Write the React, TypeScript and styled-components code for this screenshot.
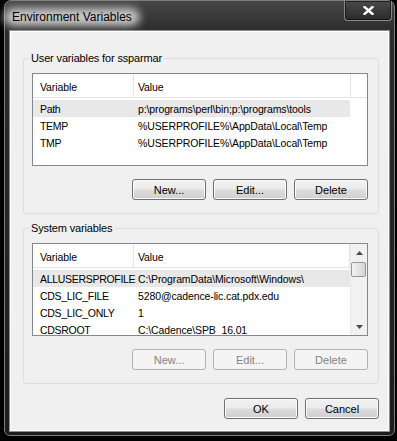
import React from 'react';
import styled, { createGlobalStyle } from 'styled-components';

type Variable = { name: string; value: string; selected?: boolean };

const userVars: Variable[] = [
  { name: 'Path', value: 'p:\\programs\\perl\\bin;p:\\programs\\tools', selected: true },
  { name: 'TEMP', value: '%USERPROFILE%\\AppData\\Local\\Temp' },
  { name: 'TMP', value: '%USERPROFILE%\\AppData\\Local\\Temp' },
];

const systemVars: Variable[] = [
  { name: 'ALLUSERSPROFILE', value: 'C:\\ProgramData\\Microsoft\\Windows\\', selected: true },
  { name: 'CDS_LIC_FILE', value: '5280@cadence-lic.cat.pdx.edu' },
  { name: 'CDS_LIC_ONLY', value: '1' },
  { name: 'CDSROOT', value: 'C:\\Cadence\\SPB_16.01' },
];

const Arrow: React.FC<{ down?: boolean }> = ({ down }) => (
  <svg width="7" height="4" viewBox="0 0 7 4">
    <path d={down ? 'M0 0 H7 L3.5 4 Z' : 'M0 4 H7 L3.5 0 Z'} fill="#4a4a4a" />
  </svg>
);

const VarList: React.FC<{ rows: Variable[]; scroll?: boolean }> = ({ rows, scroll }) => (
  <ListBox>
    <ListMain>
      <Header>
        <HeaderCell $w={101} $pad={7}>Variable</HeaderCell>
        <HeaderCell $w={scroll ? 216 : 217} $pad={4}>Value</HeaderCell>
        {!scroll && <HeaderFill />}
      </Header>
      <Rows>
        {rows.map((r) => (
          <Row key={r.name} $selected={r.selected}>
            <NameCell>{r.name}</NameCell>
            <ValueCell>{r.value}</ValueCell>
          </Row>
        ))}
      </Rows>
    </ListMain>
    {scroll && (
      <ScrollBar>
        <ScrollArrow>
          <Arrow />
        </ScrollArrow>
        <Thumb />
        <ScrollTrack />
        <ScrollArrow>
          <Arrow down />
        </ScrollArrow>
      </ScrollBar>
    )}
  </ListBox>
);

const App: React.FC = () => {
  return (
    <>
      <GlobalStyle />
      <Frame>
        <TitleBar>
          <Title>Environment Variables</Title>
          <CloseButton>
            <svg width="11" height="9" viewBox="0 0 11 9">
              <path d="M1.5 1 L9.5 8 M9.5 1 L1.5 8" stroke="#fff" strokeWidth="2.4" strokeLinecap="square" />
            </svg>
          </CloseButton>
        </TitleBar>
        <Client>
          <Group>
            <GroupLabel>User variables for ssparmar</GroupLabel>
            <VarList rows={userVars} />
            <ButtonRow>
              <Button>New...</Button>
              <Button>Edit...</Button>
              <Button>Delete</Button>
            </ButtonRow>
          </Group>
          <Group $second>
            <GroupLabel>System variables</GroupLabel>
            <VarList rows={systemVars} scroll />
            <ButtonRow>
              <Button disabled>New...</Button>
              <Button disabled>Edit...</Button>
              <Button disabled>Delete</Button>
            </ButtonRow>
          </Group>
          <Footer>
            <Button>OK</Button>
            <Button>Cancel</Button>
          </Footer>
        </Client>
      </Frame>
    </>
  );
};

export default App;

const GlobalStyle = createGlobalStyle`
  html, body {
    margin: 0;
    padding: 0;
    background: #000;
  }
  body {
    width: 397px;
    height: 441px;
    overflow: hidden;
    font-family: "Liberation Sans", Arial, sans-serif;
  }
`;

const Frame = styled.div`
  box-sizing: border-box;
  width: 391px;
  height: 436px;
  margin-left: 4px;
  border: 1px solid #7d7d7d;
  border-radius: 7px 7px 6px 6px;
  background: linear-gradient(#474747 0px, #2c2c2c 30px, #1d1d1d 100%);
  display: flex;
  flex-direction: column;
`;

const TitleBar = styled.div`
  height: 29px;
  flex-shrink: 0;
  display: flex;
  justify-content: space-between;
  align-items: flex-start;
  padding: 0 2px 0 1px;
`;

const Title = styled.div`
  position: relative;
  z-index: 0;
  margin-top: 4px;
  padding: 0 6px;
  height: 24px;
  line-height: 24px;
  font-size: 12px;
  color: #000;

  &::before {
    content: '';
    position: absolute;
    inset: 3px -2px;
    z-index: -1;
    background: rgba(215, 215, 215, 0.9);
    border-radius: 10px;
    filter: blur(4px);
  }
`;

const CloseButton = styled.div`
  box-sizing: border-box;
  width: 48px;
  height: 20px;
  border: 1px solid #8a8a8a;
  border-top: none;
  border-radius: 0 0 4px 4px;
  background: linear-gradient(#4a4a4a, #2b2b2b);
  box-shadow: inset 0 0 0 1px rgba(0, 0, 0, 0.55);
  display: flex;
  align-items: center;
  justify-content: center;
  padding-bottom: 1px;
`;

const Client = styled.div`
  flex: 1;
  margin: 0 4px 3px 4px;
  border: 1px solid #8e8e8e;
  box-shadow: inset 0 0 0 1px #fff;
  background: #f0f0f0;
  padding: 19px 10px 0 13px;
  display: flex;
  flex-direction: column;
`;

const Group = styled.fieldset<{ $second?: boolean }>`
  margin: ${(p) => (p.$second ? '6px' : '0')} 0 0 0;
  padding: 7px 10px 13px 8px;
  border: 1px solid #d5dfe5;
  border-radius: 3px;
  min-width: 0;
`;

const GroupLabel = styled.legend`
  margin-left: -3px;
  padding: 0 2px;
  font-size: 11px;
  letter-spacing: -0.15px;
  line-height: 16px;
  color: #000;
`;

const ListBox = styled.div`
  box-sizing: border-box;
  height: 93px;
  border: 1px solid #828790;
  background: #fff;
  display: flex;
  overflow: hidden;
`;

const ListMain = styled.div`
  flex: 1;
  min-width: 0;
  display: flex;
  flex-direction: column;
`;

const Header = styled.div`
  box-sizing: border-box;
  height: 24px;
  flex-shrink: 0;
  border-bottom: 1px solid #e5e5e5;
  display: flex;
`;

const HeaderCell = styled.div<{ $w: number; $pad: number }>`
  box-sizing: border-box;
  width: ${(p) => p.$w}px;
  flex-shrink: 0;
  padding: 2px 0 0 ${(p) => p.$pad}px;
  border-right: 1px solid #e5e5e5;
  display: flex;
  align-items: center;
  font-size: 10.5px;
  letter-spacing: -0.1px;
  color: #000;
`;

const HeaderFill = styled.div`
  flex: 1;
`;

const Rows = styled.div`
  padding-top: 2px;
`;

const Row = styled.div<{ $selected?: boolean }>`
  width: 317px;
  height: 17px;
  display: flex;
  align-items: center;
  font-size: 10.5px;
  letter-spacing: -0.12px;
  color: #000;
  white-space: nowrap;
  background: ${(p) => (p.$selected ? '#e8e8e8' : 'transparent')};
`;

const NameCell = styled.div`
  box-sizing: border-box;
  width: 101px;
  flex-shrink: 0;
  padding-left: 7px;
  letter-spacing: -0.3px;
`;

const ValueCell = styled.div`
  padding-left: 4px;
  overflow: hidden;
`;

const ScrollBar = styled.div`
  width: 17px;
  flex-shrink: 0;
  background: #f1f1f1;
  border-left: 1px solid #ebebeb;
  box-sizing: border-box;
  display: flex;
  flex-direction: column;
`;

const ScrollArrow = styled.div`
  height: 17px;
  flex-shrink: 0;
  display: flex;
  align-items: center;
  justify-content: center;
`;

const Thumb = styled.div`
  box-sizing: border-box;
  height: 15px;
  margin: 1px 1px 0 0;
  border: 1px solid #979797;
  border-radius: 2px;
  background: linear-gradient(90deg, #f5f5f5, #e4e4e4 50%, #d4d4d4);
`;

const ScrollTrack = styled.div`
  flex: 1;
`;

const ButtonRow = styled.div`
  display: flex;
  justify-content: flex-end;
  gap: 7px;
  margin-top: 13px;
`;

const Footer = styled(ButtonRow)`
  margin-top: 14px;
`;

const Button = styled.button`
  box-sizing: border-box;
  width: 74px;
  height: 21px;
  padding: 0;
  border: 1px solid #707070;
  border-radius: 3px;
  background: linear-gradient(#f2f2f2 0%, #ebebeb 48%, #dddddd 52%, #cfcfcf 100%);
  box-shadow: inset 0 0 0 1px #fbfbfb;
  font-family: "Liberation Sans", Arial, sans-serif;
  font-size: 11px;
  color: #000;

  &:disabled {
    border-color: #adb2b5;
    background: #f4f4f4;
    box-shadow: none;
    color: #838383;
  }
`;
